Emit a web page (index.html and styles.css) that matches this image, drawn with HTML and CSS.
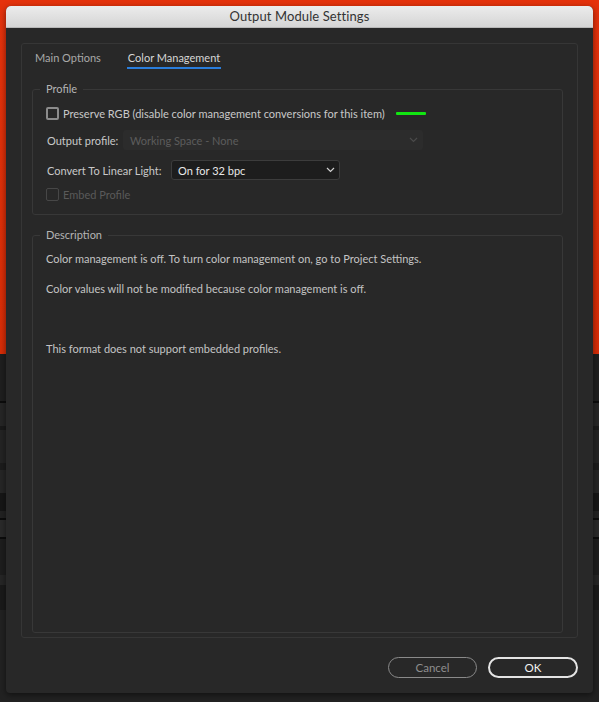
FILE: index.html
```html
<!DOCTYPE html>
<html>
<head>
<meta charset="utf-8">
<link rel="stylesheet" href="styles.css">
</head>
<body>
<div class="dialog">
  <div class="titlebar">Output Module Settings</div>
  <div class="panel">
    <div class="tabs">
      <span class="tab">Main Options</span>
      <span class="tab active">Color Management</span>
    </div>
    <fieldset class="group profile">
      <legend>Profile</legend>
      <div class="row row-preserve">
        <span class="check"></span>
        <span class="label">Preserve RGB (disable color management conversions for this item)</span>
        <span class="green"></span>
      </div>
      <div class="row row-output">
        <span class="label">Output profile:</span>
        <div class="select disabled">
          <span>Working Space - None</span>
          <svg class="chev" width="9" height="6" viewBox="0 0 9 6"><path d="M1 1l3.5 3.5L8 1" fill="none" stroke="currentColor" stroke-width="1.2"/></svg>
        </div>
      </div>
      <div class="row row-convert">
        <span class="label">Convert To Linear Light:</span>
        <div class="select active">
          <span>On for 32 bpc</span>
          <svg class="chev" width="9" height="6" viewBox="0 0 9 6"><path d="M1 1l3.5 3.5L8 1" fill="none" stroke="currentColor" stroke-width="1.2"/></svg>
        </div>
      </div>
      <div class="row row-embed">
        <span class="check disabled"></span>
        <span class="label dim">Embed Profile</span>
      </div>
    </fieldset>
    <fieldset class="group description">
      <legend>Description</legend>
      <p class="d1">Color management is off. To turn color management on, go to Project Settings.</p>
      <p class="d2">Color values will not be modified because color management is off.</p>
      <p class="d3">This format does not support embedded profiles.</p>
    </fieldset>
  </div>
  <div class="buttons">
    <button class="btn cancel">Cancel</button>
    <button class="btn ok">OK</button>
  </div>
</div>
</body>
</html>
```

FILE: styles.css
```css
html, body {
  margin: 0;
  padding: 0;
}
body {
  width: 599px;
  height: 702px;
  overflow: hidden;
  font-family: Lato, "Open Sans", sans-serif;
  background:
    linear-gradient(to bottom,
      #e5320c 0, #d82d07 354px,
      #1f1f1f 354px, #1f1f1f 401px,
      #0c0c0c 401px, #0c0c0c 403px,
      #262626 403px, #262626 426px,
      #1a1a1a 426px, #1a1a1a 430px,
      #242424 430px, #242424 463px,
      #1c1c1c 463px, #1c1c1c 470px,
      #262626 470px, #262626 493px,
      #161616 493px, #161616 511px,
      #222 511px, #222 518px,
      #0c0c0c 518px, #0c0c0c 520px,
      #2a2a2a 520px, #2a2a2a 537px,
      #0c0c0c 537px, #0c0c0c 539px,
      #1e1e1e 539px, #1e1e1e 575px,
      #262626 575px, #262626 585px,
      #1a1a1a 585px, #1a1a1a 610px,
      #222 610px, #222 702px);
  padding-top: 6px;
  box-sizing: border-box;
}
.dialog {
  margin-left: 6px;
  width: 587px;
  height: 687px;
  background: #282828;
  border-radius: 5px 5px 4px 4px;
  box-shadow: 0 2px 6px rgba(0,0,0,0.5);
  display: flex;
  flex-direction: column;
  overflow: hidden;
}
.titlebar {
  height: 21px;
  flex: none;
  background: linear-gradient(#ececec, #d5d5d5);
  border-bottom: 1px solid #b8b8b8;
  color: #333;
  font-size: 13px;
  line-height: 21px;
  text-align: center;
  letter-spacing: 0.1px;
}
.panel {
  margin: 15px 0 0 15px;
  width: 557px;
  height: 595px;
  box-sizing: border-box;
  border: 1px solid #363636;
  border-radius: 3px;
  padding: 0 14px 0 10px;
  display: flex;
  flex-direction: column;
}
.tabs {
  height: 38px;
  display: flex;
  padding-left: 3px;
  gap: 27px;
  flex: none;
}
.tab {
  font-size: 11px;
  color: #a8a8a8;
  line-height: 14px;
  margin-top: 7px;
  height: 16px;
  padding-bottom: 0;
}
.tab.active {
  color: #d6d6d6;
  border-bottom: 2px solid #2a7ddb;
  padding: 0 1px;
  margin-left: -1px;
}
.group {
  margin: 0;
  border: 1px solid #383838;
  border-radius: 3px;
  padding: 0 14px 0 13px;
  box-sizing: border-box;
  min-width: 0;
}
.group legend {
  font-size: 11px;
  color: #b4b4b4;
  padding: 0 6px;
  margin-left: -6px;
  line-height: 14px;
}
.profile {
  height: 133px;
  flex: none;
}
.description {
  margin-top: 13px;
  height: 405px;
  flex: none;
}
.row {
  display: flex;
  align-items: center;
  height: 20px;
  font-size: 11px;
  color: #c8c8c8;
}
.row-preserve { margin-top: 7px; }
.row-output { margin-top: 7px; }
.row-convert { margin-top: 10px; }
.row-embed { margin-top: 4px; }
.check {
  width: 13px;
  height: 13px;
  box-sizing: border-box;
  border: 2px solid #8c8c8c;
  border-radius: 2px;
  margin-right: 4px;
  flex: none;
}
.check.disabled {
  border-color: #474747;
  border-width: 1.5px;
}
.label {
  white-space: nowrap;
}
.label.dim {
  color: #5a5a5a;
}
.green {
  width: 30px;
  height: 3px;
  background: #12e612;
  margin-left: 11px;
  border-radius: 1px;
}
.row-output .label { margin-left: 1px; width: 76px; }
.row-convert .label { margin-left: 1px; width: 124px; }
.select {
  height: 20px;
  box-sizing: border-box;
  display: flex;
  align-items: center;
  justify-content: space-between;
  padding: 0 5px 0 7px;
  border-radius: 3px;
  font-size: 11px;
}
.select.disabled {
  width: 300px;
  background: #2c2c2c;
  color: #5c5c5c;
}
.select.disabled .chev { color: #4a4a4a; }
.select.active {
  width: 169px;
  background: #1d1d1d;
  border: 1px solid #3c3c3c;
  color: #e8e8e8;
  padding: 0 4px 0 6px;
}
.select.active .chev { color: #d0d0d0; }
.description p {
  margin: 0;
  font-size: 11px;
  color: #c4c4c4;
  line-height: 14px;
}
.description .d1 { margin-top: 10px; }
.description .d2 { margin-top: 16px; }
.description .d3 { margin-top: 46px; }
.buttons {
  display: flex;
  justify-content: flex-end;
  gap: 11px;
  margin-top: 19px;
  padding-right: 15px;
}
.btn {
  font-family: Lato, "Open Sans", sans-serif;
  height: 21px;
  width: 90px;
  border-radius: 11px;
  background: transparent;
  font-size: 11.5px;
  padding: 0;
  box-sizing: border-box;
}
.btn.cancel {
  border: 1.5px solid #8a8a8a;
  color: #8e8e8e;
  width: 89px;
}
.btn.ok {
  border: 2px solid #e4e4e4;
  color: #f2f2f2;
}
```
